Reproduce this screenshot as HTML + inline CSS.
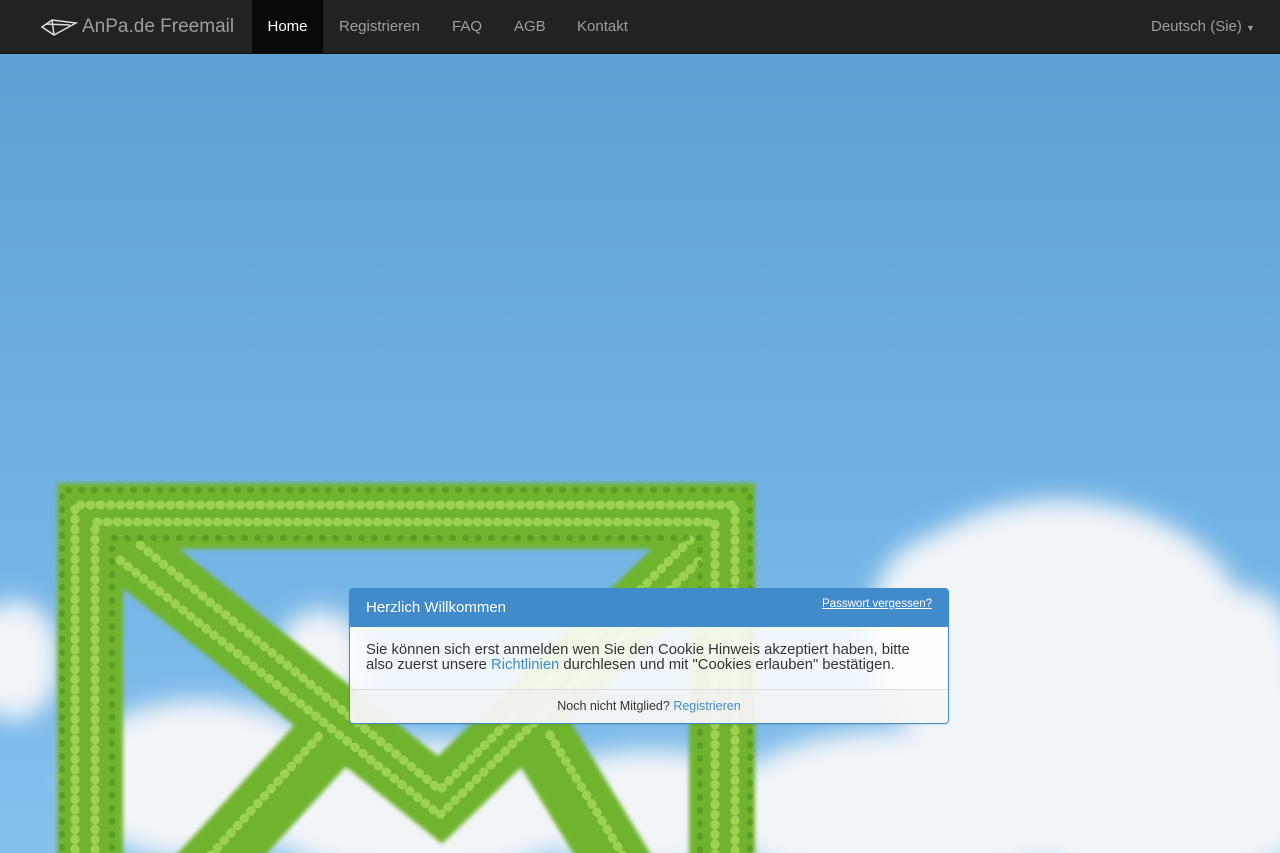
<!DOCTYPE html>
<html><head><meta charset="utf-8"><style>
*{margin:0;padding:0;box-sizing:border-box}
html,body{width:1280px;height:853px;overflow:hidden}
body{font-family:"Liberation Sans",sans-serif;position:relative;background:#6aaee0}
.nav{position:absolute;left:0;top:0;width:1280px;height:54px;background:#222;border-bottom:1px solid #080808}
.brand{position:absolute;left:40px;top:0;height:54px;display:flex;align-items:center;color:#9d9d9d;font-size:19px}
.brand svg{margin-right:4px}
.nav a{position:absolute;top:0;height:53px;line-height:53px;font-size:15px;color:#9d9d9d;text-decoration:none}
.home{left:252px;width:71px;background:#080808;color:#fff!important;text-align:center}
.panel{position:absolute;left:349px;top:588px;width:600px;height:136px;border:1px solid #428bca;border-radius:4px;overflow:hidden;box-shadow:0 1px 2px rgba(0,0,0,.1)}
.ph{height:38px;background:#428bca;color:#fff;font-size:15px;padding:10px 16px;position:relative}
.ph a{position:absolute;right:16px;top:9px;font-size:11.5px;color:#fff;text-decoration:underline}
.pb{height:62px;background:rgba(255,255,255,.88);padding:16px 30px 0 16px;font-size:14.8px;line-height:15px;color:#333}
.pb a{color:#428bca}
.pf{height:35px;background:rgba(245,245,245,.95);border-top:1px solid #ddd;text-align:center;font-size:12.5px;color:#333;padding-top:9px}
.pf a{color:#428bca}
</style></head><body>
<svg width="1280" height="853" style="position:absolute;left:0;top:0">
<defs>
<linearGradient id="sky" x1="0" y1="0" x2="0" y2="1"><stop offset="0" stop-color="#5a9fd4"/><stop offset=".6" stop-color="#72b3e5"/><stop offset="1" stop-color="#86c0ec"/></linearGradient>
<filter id="bl"><feGaussianBlur stdDeviation="12"/></filter>
<filter id="bl2"><feGaussianBlur stdDeviation="2"/></filter>
</defs>
<rect width="1280" height="853" fill="url(#sky)"/>
<g filter="url(#bl)" fill="#f2f5f8">
<ellipse cx="1060" cy="640" rx="190" ry="140"/>
<ellipse cx="1160" cy="770" rx="180" ry="120"/>
<ellipse cx="960" cy="620" rx="90" ry="90"/>
<ellipse cx="900" cy="810" rx="180" ry="80"/>
<ellipse cx="1250" cy="680" rx="50" ry="90"/>
<ellipse cx="15" cy="660" rx="45" ry="60"/>
<ellipse cx="200" cy="780" rx="130" ry="80"/>
<ellipse cx="420" cy="810" rx="160" ry="70"/>
<ellipse cx="650" cy="810" rx="130" ry="60"/>
<ellipse cx="320" cy="660" rx="45" ry="50"/>
</g>
<g stroke="#6fb42f" stroke-width="66" fill="none" stroke-linecap="round" filter="url(#bl2)">
<path d="M90 900 V516 H722 V900"/>
<path d="M125 548 L440 800 L700 548"/>
<path d="M180 900 L330 735"/>
<path d="M540 735 L640 900"/>
</g>
<g stroke="#a3d85a" stroke-width="9" fill="none" stroke-dasharray="1 9" stroke-linecap="round" opacity=".85">
<path d="M75 900 V505 H735 V900"/>
<path d="M95 900 V522 H715 V900"/>
<path d="M120 560 L440 815 L700 560"/>
<path d="M140 545 L440 790 L690 540"/>
<path d="M170 900 L320 735"/>
<path d="M550 735 L650 900"/>
</g>
<g stroke="#4e8f1f" stroke-width="6" fill="none" stroke-dasharray="1 12" stroke-linecap="round" opacity=".6">
<path d="M62 900 V490 H750 V900"/>
<path d="M112 900 V538 H700 V900"/>
</g>
</svg>
<div class="nav">
<div class="brand"><svg width="38" height="22" viewBox="0 0 38 22" fill="none" stroke="#ddd" stroke-width="1.5"><path d="M2 11 L12 4 L36 7 L14 19 Z M2 11 L14 19 M12 4 L14 19 M6 8 L30 9"/></svg>AnPa.de Freemail</div>
<a class="home">Home</a>
<a style="left:339px">Registrieren</a>
<a style="left:452px">FAQ</a>
<a style="left:514px">AGB</a>
<a style="left:577px">Kontakt</a>
<a style="left:1151px">Deutsch (Sie) <span style="font-size:9px">▼</span></a>
</div>
<div class="panel">
<div class="ph">Herzlich Willkommen<a>Passwort vergessen?</a></div>
<div class="pb">Sie können sich erst anmelden wen Sie den Cookie Hinweis akzeptiert haben, bitte also zuerst unsere <a>Richtlinien</a> durchlesen und mit "Cookies erlauben" bestätigen.</div>
<div class="pf">Noch nicht Mitglied? <a>Registrieren</a></div>
</div>
</body></html>
